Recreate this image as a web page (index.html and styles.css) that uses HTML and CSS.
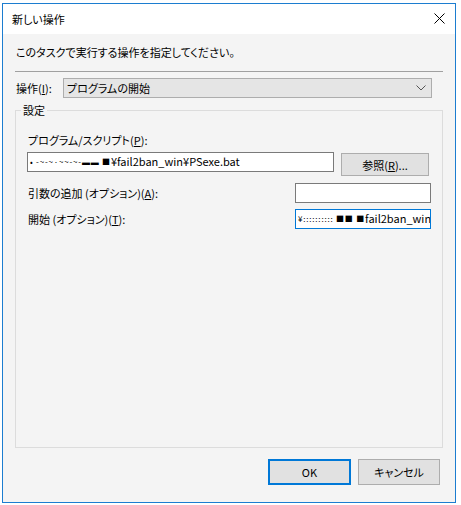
FILE: index.html
```html
<!DOCTYPE html>
<html lang="ja">
<head>
<meta charset="utf-8">
<link rel="stylesheet" href="styles.css">
</head>
<body>
<div class="window">
  <div class="titlebar">
    <span class="title">新しい操作</span>
    <svg class="close" width="11" height="11" viewBox="0 0 11 11"><path d="M0.5 0.5 L10.5 10.5 M10.5 0.5 L0.5 10.5" stroke="#000" stroke-width="1" fill="none"/></svg>
  </div>
  <div class="body">
    <div class="instruction">このタスクで実行する操作を指定してください。</div>
    <div class="separator"></div>
    <div class="action-row">
      <span class="label">操作(<u>I</u>):</span>
      <div class="combo">
        <span>プログラムの開始</span>
        <svg class="chev" width="10" height="6" viewBox="0 0 10 6"><path d="M0.5 0.5 L5 5 L9.5 0.5" stroke="#555" stroke-width="1" fill="none"/></svg>
      </div>
    </div>
    <div class="group">
      <span class="legend">設定</span>
      <div class="glabel">プログラム/スクリプト(<u>P</u>):</div>
      <div class="prog-row">
        <div class="input prog"><span class="mask">• -~-~·~~-~-▬▬ ■</span>¥fail2ban_win¥PSexe.bat</div>
        <div class="btn browse">参照(<u>R</u>)...</div>
      </div>
      <div class="opt-row r2">
        <span class="label">引数の追加 (オプション)(<u>A</u>):</span>
        <div class="input small"></div>
      </div>
      <div class="opt-row r3">
        <span class="label">開始 (オプション)(<u>T</u>):</span>
        <div class="input small focus"><span class="mask">¥:::::::::: ■■ ■</span>fail2ban_win</div>
      </div>
    </div>
    <div class="buttons">
      <div class="btn ok">OK</div>
      <div class="btn cancel">キャンセル</div>
    </div>
  </div>
</div>
</body>
</html>
```

FILE: styles.css
```css
* { box-sizing: border-box; }
html, body { margin: 0; padding: 0; }
body {
  background: #ffffff;
  font-family: "Noto Sans CJK JP", "Noto Sans", sans-serif;
  font-size: 11px;
  font-feature-settings: "palt";
  color: #000;
  width: 461px;
  height: 505px;
  overflow: hidden;
}
u { text-decoration: underline; text-underline-offset: 1px; }
.window {
  margin: 3px 0 0 2px;
  width: 454px;
  height: 500px;
  border: 1px solid #1c7dd0;
  display: flex;
  flex-direction: column;
  background: #f4f4f4;
}
.titlebar {
  height: 30px;
  background: #ffffff;
  display: flex;
  align-items: center;
  justify-content: space-between;
  padding: 0 10px 0 9px;
  flex: none;
}
.title { line-height: 16px; }
.close { display: block; margin-top: -2px; }
.body {
  flex: 1;
  padding: 10px 12px 0 12px;
  display: flex;
  flex-direction: column;
}
.instruction { line-height: 16px; padding-left: 1px; }
.separator {
  height: 1px;
  background: #a0a0a0;
  margin-top: 11px;
}
.action-row {
  display: flex;
  align-items: center;
  margin-top: 6px;
  height: 20px;
}
.action-row .label { width: 48px; padding-left: 1px; line-height: 16px; }
.combo {
  width: 369px;
  height: 20px;
  background: #e5e5e5;
  border: 1px solid #adadad;
  display: flex;
  align-items: center;
  justify-content: space-between;
  padding: 0 5px 0 3px;
  line-height: 16px;
}
.chev { display: block; }
.group {
  position: relative;
  margin-top: 12px;
  height: 338px;
  border: 1px solid #dcdcdc;
  padding: 21px 0 0 11px;
}
.legend {
  position: absolute;
  top: -9px;
  left: 5px;
  padding: 0 2px;
  background: #f4f4f4;
  line-height: 16px;
}
.glabel { line-height: 16px; padding-left: 1px; }
.prog-row {
  display: flex;
  align-items: flex-start;
  margin-top: 4px;
}
.input {
  height: 20px;
  background: #fff;
  border: 1px solid #7a7a7a;
  line-height: 17px;
  padding: 0 2px;
  white-space: nowrap;
  overflow: hidden;
}
.input.prog { width: 307px; }
.mask { font-size: 8px; letter-spacing: 0.8px; vertical-align: 1px; }
.btn {
  display: flex;
  align-items: center;
  justify-content: center;
  background: #e1e1e1;
  border: 1px solid #adadad;
  line-height: 16px;
}
.browse {
  width: 88px;
  height: 23px;
  margin-left: 7px;
  margin-top: 1px;
}
.opt-row {
  display: flex;
  align-items: center;
  justify-content: space-between;
  padding-right: 11px;
}
.opt-row .label { padding-left: 1px; line-height: 16px; }
.r2 { margin-top: 7px; }
.r3 { margin-top: 6px; }
.input.small { width: 136px; }
.input.focus { border-color: #0078d7; }
.buttons {
  display: flex;
  justify-content: flex-end;
  gap: 7px;
  margin-top: 11px;
  padding-right: 3px;
}
.ok {
  width: 83px;
  height: 26px;
  border: 2px solid #0078d7;
}
.cancel {
  width: 82px;
  height: 26px;
}
```
